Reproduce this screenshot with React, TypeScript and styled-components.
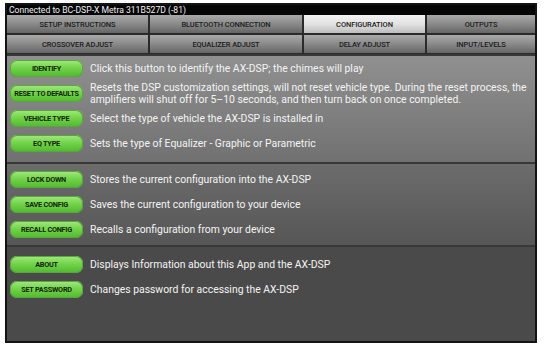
import React from 'react';
import styled, {createGlobalStyle} from 'styled-components';

const GlobalStyle = createGlobalStyle`
  body {
    margin: 0;
    background: #ffffff;
    font-family: Roboto, "Liberation Sans", sans-serif;
  }
`;

const TABS: string[][] = [
  ['SETUP INSTRUCTIONS', 'BLUETOOTH CONNECTION', 'CONFIGURATION', 'OUTPUTS'],
  ['CROSSOVER ADJUST', 'EQUALIZER ADJUST', 'DELAY ADJUST', 'INPUT/LEVELS'],
];
const ACTIVE_TAB = 'CONFIGURATION';

type Item = {label: string; lines: string[]};
type Tone = 'light' | 'mid' | 'dark';

const SECTIONS: {tone: Tone; items: Item[]}[] = [
  {
    tone: 'light',
    items: [
      {label: 'IDENTIFY', lines: ['Click this button to identify the AX-DSP; the chimes will play']},
      {
        label: 'RESET TO DEFAULTS',
        lines: [
          'Resets the DSP customization settings, will not reset vehicle type. During the reset process, the',
          'amplifiers will shut off for 5–10 seconds, and then turn back on once completed.',
        ],
      },
      {label: 'VEHICLE TYPE', lines: ['Select the type of vehicle the AX-DSP is installed in']},
      {label: 'EQ TYPE', lines: ['Sets the type of Equalizer - Graphic or Parametric']},
    ],
  },
  {
    tone: 'mid',
    items: [
      {label: 'LOCK DOWN', lines: ['Stores the current configuration into the AX-DSP']},
      {label: 'SAVE CONFIG', lines: ['Saves the current configuration to your device']},
      {label: 'RECALL CONFIG', lines: ['Recalls a configuration from your device']},
    ],
  },
  {
    tone: 'dark',
    items: [
      {label: 'ABOUT', lines: ['Displays Information about this App and the AX-DSP']},
      {label: 'SET PASSWORD', lines: ['Changes password for accessing the AX-DSP']},
    ],
  },
];

export default function App() {
  return (
    <>
      <GlobalStyle />
      <Frame>
        <StatusBar>Connected to BC-DSP-X Metra 311B527D (-81)</StatusBar>
        <TabGrid>
          {TABS.flat().map(t => (
            <Tab key={t} $active={t === ACTIVE_TAB}>
              {t}
            </Tab>
          ))}
        </TabGrid>
        {SECTIONS.map((s, i) => (
          <Section key={i} $tone={s.tone}>
            {s.items.map(item => (
              <Row key={item.label}>
                <GreenButton>{item.label}</GreenButton>
                <Description>
                  {item.lines.map(l => (
                    <div key={l}>{l}</div>
                  ))}
                </Description>
              </Row>
            ))}
          </Section>
        ))}
      </Frame>
    </>
  );
}

const Frame = styled.div`
  margin: 3px 0 0 5px;
  width: 528px;
  height: 336px;
  border: 2px solid #141414;
  background: #1a1a1a;
  display: flex;
  flex-direction: column;
  overflow: hidden;
`;

const StatusBar = styled.div`
  height: 10px;
  line-height: 10px;
  padding-left: 2px;
  background: #050505;
  color: #f2f2f2;
  font-size: 8.6px;
`;

const TabGrid = styled.div`
  display: grid;
  grid-template-columns: 141px 152px 121px 108px;
  grid-auto-rows: 18px;
  gap: 2px;
  padding-top: 0;
  padding-bottom: 1px;
  background: #2a2a2a;
`;

const Tab = styled.div<{$active: boolean}>`
  display: flex;
  align-items: center;
  justify-content: center;
  font-size: 7.5px;
  font-weight: 500;
  color: #1c1c1c;
  letter-spacing: -0.1px;
  background: ${p =>
    p.$active
      ? 'linear-gradient(#f4f4f4 0%, #e2e2e2 50%, #bdbdbd 100%)'
      : 'linear-gradient(#a9a9a9 0%, #8d8d8d 45%, #666666 100%)'};
`;

const TONES: Record<Tone, {bg: string; pad: string}> = {
  light: {bg: 'linear-gradient(#909090, #717171)', pad: '0 0 6px'},
  mid: {bg: 'linear-gradient(#6c6c6c, #565656)', pad: '3px 0 3px'},
  dark: {bg: '#4a4a4a', pad: '5px 0 0'},
};

const Section = styled.div<{$tone: Tone}>`
  display: flex;
  flex-direction: column;
  padding: ${p => TONES[p.$tone].pad};
  background: ${p => TONES[p.$tone].bg};
  border-top: 2px solid #383838;
  flex: ${p => (p.$tone === 'dark' ? 1 : 'none')};
  &:first-of-type {
    border-top: none;
  }
`;

const Row = styled.div`
  display: flex;
  align-items: center;
  gap: 7px;
  height: 25px;
  padding-left: 3px;
`;

const GreenButton = styled.div`
  flex: none;
  width: 73px;
  height: 17px;
  border-radius: 7px;
  display: flex;
  align-items: center;
  justify-content: center;
  background: linear-gradient(#a2ea7e 0%, #74d44c 45%, #4fb82e 100%);
  box-shadow: 0 0 0 1px #5aa53c inset;
  color: #14240c;
  font-size: 7.3px;
  font-weight: 700;
  letter-spacing: -0.25px;
  white-space: nowrap;
`;

const Description = styled.div`
  color: #f4f4f4;
  font-size: 10.4px;
  line-height: 12px;
  white-space: nowrap;
`;
